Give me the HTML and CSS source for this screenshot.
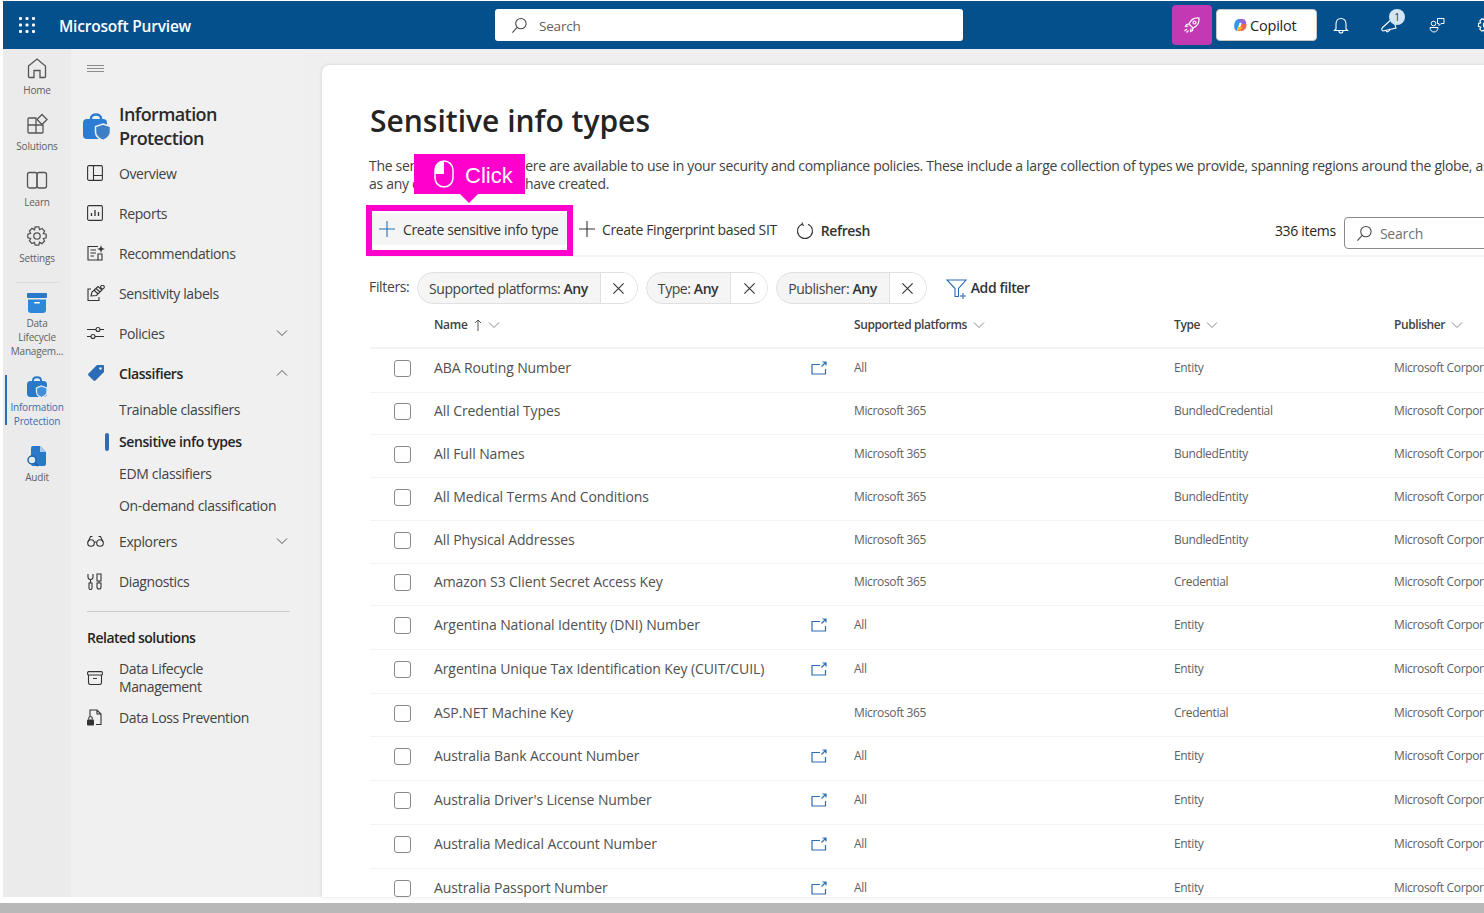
FILE: index.html
```html
<!DOCTYPE html>
<html lang="en">
<head>
    <meta charset="UTF-8">
    <title>Sensitive info types - Microsoft Purview</title>
    <link rel="stylesheet" href="styles.css">
</head>
<body>
    <svg class="defs" width="0" height="0">
        <symbol id="ic-ext" viewBox="0 0 16 14"><path d="M9 3.500H1V13H14.500V8M10.500 5.500L15 1M11.500 1H15V4.500" fill="none" stroke="#2b6cb5" stroke-width="1.200"/></symbol>
        <symbol id="ic-chev" viewBox="0 0 12 8"><path d="M1 1.500L6 6.500L11 1.500" fill="none" stroke="currentColor" stroke-width="1"/></symbol>
        <symbol id="ic-x" viewBox="0 0 14 14"><path d="M1.500 1.500L12.500 12.500M12.500 1.500L1.500 12.500" fill="none" stroke="#333" stroke-width="1.200"/></symbol>
        <symbol id="ic-search" viewBox="0 0 18 18"><circle cx="10.500" cy="7" r="5.500" fill="none" stroke="currentColor" stroke-width="1.100"/><path d="M6.500 11L1.500 16.500" stroke="currentColor" stroke-width="1.100"/></symbol>
        <symbol id="ic-plus" viewBox="0 0 18 18"><path d="M9 1V17M1 9H17" fill="none" stroke="currentColor" stroke-width="1.100"/></symbol>
    </svg>

    <div class="app">
        <header class="topbar">
            <svg class="waffle" width="16" height="16" viewBox="0 0 16 16" fill="#fff">
                <rect x="0" y="0" width="3" height="3" rx="1"/><rect x="6.500" y="0" width="3" height="3" rx="1"/><rect x="13" y="0" width="3" height="3" rx="1"/>
                <rect x="0" y="6.500" width="3" height="3" rx="1"/><rect x="6.500" y="6.500" width="3" height="3" rx="1"/><rect x="13" y="6.500" width="3" height="3" rx="1"/>
                <rect x="0" y="13" width="3" height="3" rx="1"/><rect x="6.500" y="13" width="3" height="3" rx="1"/><rect x="13" y="13" width="3" height="3" rx="1"/>
            </svg>
            <div class="brand">Microsoft Purview</div>
            <div class="topsearch">
                <svg width="17" height="17"><use href="#ic-search"/></svg>
                <span>Search</span>
            </div>
            <div class="rocket">
                <svg width="18" height="18" viewBox="0 0 18 18" fill="none" stroke="#fff" stroke-width="1.200">
                    <path d="M6 8C8 3.500 12 1.500 16 2C16.500 6 14.500 10 10 12L6 8Z"/>
                    <circle cx="11.500" cy="6.500" r="1.500"/>
                    <path d="M6 8L3.500 8.500L2.500 10.500L5.500 10M10 12L9.500 14.500L7.500 15.500L8 12.500M4 13L1.500 15M5.500 14.500L3.500 16.500"/>
                </svg>
            </div>
            <div class="copilot">
                <svg width="14" height="14" viewBox="0 0 14 14">
                    <path d="M2 4C3 1.500 5 1 7 1H9.500L6 7L3.500 13C1 12 0.500 7.500 2 4Z" fill="#2f9be8"/>
                    <path d="M6 1H10C12.500 1.500 13.500 4 13 6H8.500Z" fill="#9a62d8"/>
                    <path d="M8.500 6H13.500C14 9 12 13 8.500 13H3.500C5.500 12 7 9.500 8.500 6Z" fill="#ee6a4d"/>
                    <path d="M5 9H9L7.500 12.500H4Z" fill="#f7b733"/>
                    <path d="M6.500 5H8.500L7 9H5.500Z" fill="#fff"/>
                </svg>
                <span>Copilot</span>
            </div>
            <svg class="tb-bell" width="16" height="17" viewBox="0 0 16 17" fill="none" stroke="#fff" stroke-width="1.100">
                <path d="M3 12V7C3 3.500 5 1.500 8 1.500C11 1.500 13 3.500 13 7V12L14.500 13.500H1.500L3 12Z"/>
                <path d="M6 14C6 15.500 7 16 8 16C9 16 10 15.500 10 14"/>
            </svg>
            <div class="tb-mega">
                <svg width="18" height="18" viewBox="0 0 18 18" fill="none" stroke="#fff" stroke-width="1.100">
                    <path d="M12 2L15 12L2 15C0.500 14.500 0.500 12.500 1.500 11.500L12 2Z"/>
                    <path d="M5 14.500C5.500 16.500 8 16.500 9 13"/>
                </svg>
                <span class="badge">1</span>
            </div>
            <svg class="tb-feedback" width="16" height="16" viewBox="0 0 16 16" fill="none" stroke="#fff" stroke-width="1">
                <circle cx="4.500" cy="6.500" r="2.300"/>
                <path d="M1 10.500H9C9 13.500 7 15 5 15C3 15 1 13.500 1 10.500Z"/>
                <path d="M8.500 1.500H15V6.500H12L10 8.500V6.500H8.500Z"/>
            </svg>
            <svg class="tb-gear" width="18" height="18" viewBox="0 0 24 24" fill="none" stroke="#fff" stroke-width="1.500">
                <circle cx="12" cy="12" r="3.500"/>
                <path d="M10 2H14L14.800 5L17.500 3.800L20.300 6.600L18.900 9.300L22 10V14L19 14.800L20.200 17.500L17.400 20.300L14.700 18.900L14 22H10L9.200 19L6.500 20.200L3.700 17.400L5.100 14.700L2 14V10L5 9.200L3.800 6.500L6.600 3.700L9.300 5.100Z"/>
            </svg>
        </header>

        <div class="workspace">
            <aside class="rail">
                <div class="rail-item rail-top">
                    <svg width="22" height="22" viewBox="0 0 22 22" fill="none" stroke="#555" stroke-width="1.300"><path d="M2.500 9L11 2L19.500 9V19.500A1 1 0 0 1 18.500 20.500H14V13.500H8V20.500H3.500A1 1 0 0 1 2.500 19.500Z"/></svg>
                    <span>Home</span>
                </div>
                <div class="rail-item rail-top">
                    <svg width="22" height="22" viewBox="0 0 22 22" fill="none" stroke="#555" stroke-width="1.300"><path d="M10 5H3A1 1 0 0 0 2 6V19A1 1 0 0 0 3 20H16A1 1 0 0 0 17 19V12H10ZM2 12H10V20"/><path d="M16 1.500L21 6.500L16 11.500L11 6.500Z"/></svg>
                    <span>Solutions</span>
                </div>
                <div class="rail-item rail-top">
                    <svg width="22" height="22" viewBox="0 0 22 22" fill="none" stroke="#555" stroke-width="1.300"><rect x="1.500" y="3.500" width="9.500" height="15.500" rx="2"/><rect x="11" y="3.500" width="9.500" height="15.500" rx="2"/></svg>
                    <span>Learn</span>
                </div>
                <div class="rail-item rail-top">
                    <svg width="22" height="22" viewBox="0 0 24 24" fill="none" stroke="#555" stroke-width="1.400"><circle cx="12" cy="12" r="3.500"/><path d="M10 2H14L14.800 5L17.500 3.800L20.300 6.600L18.900 9.300L22 10V14L19 14.800L20.200 17.500L17.400 20.300L14.700 18.900L14 22H10L9.200 19L6.500 20.200L3.700 17.400L5.100 14.700L2 14V10L5 9.200L3.800 6.500L6.600 3.700L9.300 5.100Z"/></svg>
                    <span>Settings</span>
                </div>
                <div class="rail-sep"></div>
                <div class="rail-item rail-tall">
                    <svg width="22" height="22" viewBox="0 0 22 22"><rect x="1" y="1" width="20" height="5" rx="1" fill="#2a79c9"/><path d="M2 7.500H20V18A3 3 0 0 1 17 21H5A3 3 0 0 1 2 18Z" fill="#2e87d8"/><rect x="8" y="10" width="6" height="1.500" rx=".7" fill="#fff"/></svg>
                    <span>Data<br>Lifecycle<br>Managem...</span>
                </div>
                <div class="rail-item rail-active">
                    <svg width="22" height="22" viewBox="0 0 22 22"><path d="M7 7V5.500C7 1 15 1 15 5.500V7" fill="none" stroke="#2a79c9" stroke-width="2"/><rect x="1" y="6" width="20" height="16" rx="3.500" fill="#2a79c9"/><path d="M15.500 11L21 13V17C21 20 18 21.500 15.500 22.500C13 21.500 10.500 20 10.500 17V13Z" fill="#3f8fdc" stroke="#ebebeb" stroke-width="1.300"/></svg>
                    <span>Information<br>Protection</span>
                </div>
                <div class="rail-item">
                    <svg width="22" height="22" viewBox="0 0 22 22"><path d="M7 1H14L20 7V19A2 2 0 0 1 18 21H7A2 2 0 0 1 5 19V3A2 2 0 0 1 7 1Z" fill="#2a79c9"/><path d="M14 1L20 7H14Z" fill="#a9cdf0"/><circle cx="6" cy="15" r="4" fill="#dce9f6" stroke="#1f64aa" stroke-width="1.500"/><path d="M9 18L12 21" stroke="#1f64aa" stroke-width="1.800"/></svg>
                    <span>Audit</span>
                </div>
            </aside>

            <nav class="nav">
                <svg class="hamburger" width="17" height="8" viewBox="0 0 17 8"><path d="M0 .5H17M0 3.500H17M0 6.500H17" stroke="#8a8a8a" stroke-width="1"/></svg>
                <div class="nav-head">
                    <svg width="28" height="29" viewBox="0 0 28 29">
                        <path d="M8 9V6.500C8 1 18 1 18 6.500V9" fill="none" stroke="#2b7cd3" stroke-width="2.500"/>
                        <rect x="0" y="7" width="24" height="20" rx="4" fill="#2b7cd3"/>
                        <path d="M20 12L27.500 14.500V20C27.500 24.500 23.500 27 20 28.500C16.500 27 12.500 24.500 12.500 20V14.500Z" fill="#3d7fc6" stroke="#f0f0f0" stroke-width="1.500"/>
                    </svg>
                    <div class="nav-title">Information Protection</div>
                </div>
                <ul class="nav-list">
                    <li class="nav-item">
                        <svg width="16" height="16" viewBox="0 0 16 16" fill="none" stroke="#333" stroke-width="1.100"><rect x=".6" y=".6" width="14.800" height="14.800" rx="1.500"/><path d="M6.500 .6V15.400M6.500 10.500H15.400"/></svg>
                        <span>Overview</span>
                    </li>
                    <li class="nav-item">
                        <svg width="16" height="16" viewBox="0 0 16 16" fill="none" stroke="#333" stroke-width="1.100"><rect x=".6" y=".6" width="14.800" height="14.800" rx="1.500"/><path d="M4.500 11V8M8 11V5M11.500 11V7" stroke-width="1.300"/></svg>
                        <span>Reports</span>
                    </li>
                    <li class="nav-item">
                        <svg width="18" height="16" viewBox="0 0 18 16" fill="none" stroke="#333" stroke-width="1.100"><path d="M11 1.500H1V15H11M3.500 5H9M3.500 8H9M3.500 11H7"/><path d="M11 9H15V15H11Z"/><path d="M14 0L15 3L18 4L15 5L14 8L13 5L10 4L13 3Z" fill="#333" stroke="none"/></svg>
                        <span>Recommendations</span>
                    </li>
                    <li class="nav-item">
                        <svg width="18" height="17" viewBox="0 0 18 17" fill="none" stroke="#333" stroke-width="1.100"><path d="M4 4H1V15.500H12V12"/><path d="M4 11L5 7L11 1.500L15 5L9.500 10.500Z"/><path d="M7 5L11 9M9 3.500L13 7M14 1A1.500 1.500 0 1 1 17 3A1.500 1.500 0 0 1 14 1Z"/></svg>
                        <span>Sensitivity labels</span>
                    </li>
                    <li class="nav-item">
                        <svg width="17" height="14" viewBox="0 0 17 14" fill="none" stroke="#333" stroke-width="1.100"><path d="M0 3.500H9M13 3.500H17M0 10.500H4M8 10.500H17"/><circle cx="11" cy="3.500" r="2"/><circle cx="6" cy="10.500" r="2"/></svg>
                        <span>Policies</span>
                        <svg class="nav-chev" width="12" height="8"><use href="#ic-chev"/></svg>
                    </li>
                    <li class="nav-item nav-item-bold">
                        <svg width="18" height="18" viewBox="0 0 18 18"><path d="M10 1H16A1 1 0 0 1 17 2V8L8.500 16.500A1.500 1.500 0 0 1 6.500 16.500L1.500 11.500A1.500 1.500 0 0 1 1.500 9.500Z" fill="#2b6cb5"/><circle cx="13.500" cy="4.500" r="1.200" fill="#f0f0f0"/></svg>
                        <span>Classifiers</span>
                        <svg class="nav-chev nav-chev-up" width="12" height="8"><use href="#ic-chev"/></svg>
                    </li>
                </ul>
                <ul class="nav-sub">
                    <li>Trainable classifiers</li>
                    <li class="nav-sub-active">Sensitive info types</li>
                    <li>EDM classifiers</li>
                    <li>On-demand classification</li>
                </ul>
                <ul class="nav-list">
                    <li class="nav-item">
                        <svg width="17" height="12" viewBox="0 0 17 12" fill="none" stroke="#333" stroke-width="1.100"><circle cx="4" cy="8" r="3.300"/><circle cx="13" cy="8" r="3.300"/><path d="M7.300 7.500C8 6.800 9 6.800 9.700 7.500M1 7L3.500 1.500H5.500M16 7L13.500 1.500H11.500"/></svg>
                        <span>Explorers</span>
                        <svg class="nav-chev" width="12" height="8"><use href="#ic-chev"/></svg>
                    </li>
                    <li class="nav-item">
                        <svg width="16" height="17" viewBox="0 0 16 17" fill="none" stroke="#333" stroke-width="1.100"><path d="M1 1V4A2.500 2.500 0 0 0 6 4V1M3.500 6.500V10M2 10H5V15A1.500 1.500 0 0 1 2 15Z"/><path d="M10 1H14V8H10ZM12 8V10M10 10H14V14A2 2 0 0 1 10 14Z"/></svg>
                        <span>Diagnostics</span>
                    </li>
                </ul>
                <div class="nav-divider"></div>
                <div class="nav-related">Related solutions</div>
                <div class="nav-item nav-item-wrap">
                    <svg width="16" height="14" viewBox="0 0 16 14" fill="none" stroke="#333" stroke-width="1.100"><rect x=".6" y=".6" width="14.800" height="3.400" rx="1"/><path d="M1.500 4V11.500A2 2 0 0 0 3.500 13.500H12.500A2 2 0 0 0 14.500 11.500V4M6 7.500H10"/></svg>
                    <span>Data Lifecycle<br>Management</span>
                </div>
                <div class="nav-item nav-item-last">
                    <svg width="15" height="17" viewBox="0 0 15 17" fill="none" stroke="#333" stroke-width="1.100"><path d="M3 7V1H10L14 5V15.500H9M10 1V5H14"/><rect x="0" y="10.500" width="7" height="6" rx="1" fill="#333" stroke="none"/><path d="M1.800 10.500V9C1.800 7 5.200 7 5.200 9V10.500"/></svg>
                    <span>Data Loss Prevention</span>
                </div>
            </nav>

            <main class="panel">
                <h1 class="page-title">Sensitive info types</h1>
                <p class="page-desc">The sensitive info types here are available to use in your security and compliance policies. These include a large collection of types we provide, spanning regions around the globe, as well<br>as any custom types you have created.</p>

                <div class="toolbar">
                    <div class="tool tool-hover">
                        <svg class="tool-blue" width="18" height="18"><use href="#ic-plus"/></svg>
                        <span>Create sensitive info type</span>
                    </div>
                    <div class="tool tool-finger">
                        <svg width="18" height="18"><use href="#ic-plus"/></svg>
                        <span>Create Fingerprint based SIT</span>
                    </div>
                    <div class="tool tool-refresh">
                        <svg width="18" height="18" viewBox="0 0 18 18" fill="none" stroke="#333" stroke-width="1.100"><path d="M6 2.200A7.500 7.500 0 1 0 12 2.200"/><path d="M6.500 .5L6 2.500L8 3.500"/></svg>
                        <span>Refresh</span>
                    </div>
                    <div class="tool-count">336 items</div>
                    <div class="list-search">
                        <svg width="17" height="17"><use href="#ic-search"/></svg>
                        <span>Search</span>
                    </div>
                </div>

                <div class="filters">
                    <span class="filters-label">Filters:</span>
                    <div class="pill"><span class="pill-text">Supported platforms: <b>Any</b></span><span class="pill-x"><svg width="13" height="13"><use href="#ic-x"/></svg></span></div>
                    <div class="pill"><span class="pill-text">Type: <b>Any</b></span><span class="pill-x"><svg width="13" height="13"><use href="#ic-x"/></svg></span></div>
                    <div class="pill"><span class="pill-text">Publisher: <b>Any</b></span><span class="pill-x"><svg width="13" height="13"><use href="#ic-x"/></svg></span></div>
                    <div class="add-filter">
                        <svg width="22" height="20" viewBox="0 0 22 20" fill="none" stroke="#2b6cb5" stroke-width="1.100"><path d="M1 1H20L12.500 9.500V17.500H9V9.500Z"/><path d="M17 14V20M14 17H20"/></svg>
                        <span>Add filter</span>
                    </div>
                </div>

                <div class="row row-head">
                    <div></div>
                    <div class="cell-name">Name <svg class="sort-up" width="8" height="12" viewBox="0 0 8 12" fill="none" stroke="#555"><path d="M4 12V1M1 4L4 1L7 4"/></svg><svg class="hd-chev" width="12" height="8"><use href="#ic-chev"/></svg></div>
                    <div>Supported platforms<svg class="hd-chev" width="12" height="8"><use href="#ic-chev"/></svg></div>
                    <div>Type<svg class="hd-chev" width="12" height="8"><use href="#ic-chev"/></svg></div>
                    <div>Publisher<svg class="hd-chev" width="12" height="8"><use href="#ic-chev"/></svg></div>
                </div>

                <div class="row row-tall"><div><span class="check"></span></div><div class="cell-name">ABA Routing Number<svg class="ext" width="16" height="14"><use href="#ic-ext"/></svg></div><div>All</div><div>Entity</div><div>Microsoft Corporation</div></div>
                <div class="row row-short"><div><span class="check"></span></div><div class="cell-name">All Credential Types</div><div>Microsoft 365</div><div>BundledCredential</div><div>Microsoft Corporation</div></div>
                <div class="row"><div><span class="check"></span></div><div class="cell-name">All Full Names</div><div>Microsoft 365</div><div>BundledEntity</div><div>Microsoft Corporation</div></div>
                <div class="row"><div><span class="check"></span></div><div class="cell-name">All Medical Terms And Conditions</div><div>Microsoft 365</div><div>BundledEntity</div><div>Microsoft Corporation</div></div>
                <div class="row"><div><span class="check"></span></div><div class="cell-name">All Physical Addresses</div><div>Microsoft 365</div><div>BundledEntity</div><div>Microsoft Corporation</div></div>
                <div class="row row-short"><div><span class="check"></span></div><div class="cell-name">Amazon S3 Client Secret Access Key</div><div>Microsoft 365</div><div>Credential</div><div>Microsoft Corporation</div></div>
                <div class="row row-tall"><div><span class="check"></span></div><div class="cell-name">Argentina National Identity (DNI) Number<svg class="ext" width="16" height="14"><use href="#ic-ext"/></svg></div><div>All</div><div>Entity</div><div>Microsoft Corporation</div></div>
                <div class="row row-tall"><div><span class="check"></span></div><div class="cell-name">Argentina Unique Tax Identification Key (CUIT/CUIL)<svg class="ext" width="16" height="14"><use href="#ic-ext"/></svg></div><div>All</div><div>Entity</div><div>Microsoft Corporation</div></div>
                <div class="row"><div><span class="check"></span></div><div class="cell-name">ASP.NET Machine Key</div><div>Microsoft 365</div><div>Credential</div><div>Microsoft Corporation</div></div>
                <div class="row row-tall"><div><span class="check"></span></div><div class="cell-name">Australia Bank Account Number<svg class="ext" width="16" height="14"><use href="#ic-ext"/></svg></div><div>All</div><div>Entity</div><div>Microsoft Corporation</div></div>
                <div class="row row-tall"><div><span class="check"></span></div><div class="cell-name">Australia Driver's License Number<svg class="ext" width="16" height="14"><use href="#ic-ext"/></svg></div><div>All</div><div>Entity</div><div>Microsoft Corporation</div></div>
                <div class="row row-tall"><div><span class="check"></span></div><div class="cell-name">Australia Medical Account Number<svg class="ext" width="16" height="14"><use href="#ic-ext"/></svg></div><div>All</div><div>Entity</div><div>Microsoft Corporation</div></div>
                <div class="row row-tall"><div><span class="check"></span></div><div class="cell-name">Australia Passport Number<svg class="ext" width="16" height="14"><use href="#ic-ext"/></svg></div><div>All</div><div>Entity</div><div>Microsoft Corporation</div></div>

                <!-- tutorial callout over the page -->
                <div class="hl-box"></div>
                <div class="click-tip">
                    <svg width="20" height="28" viewBox="0 0 20 28" fill="none" stroke="#fff" stroke-width="1.500">
                        <path d="M10 1A9 9 0 0 0 1 10V14H10Z" fill="#fff" stroke="none"/>
                        <rect x="1" y="1" width="18" height="26" rx="9"/>
                    </svg>
                    <span>Click</span>
                </div>
            </main>
        </div>
    </div>
    <div class="page-strip"></div>
</body>
</html>
```

FILE: styles.css
```css
* {
    box-sizing: border-box;
    margin: 0;
    padding: 0;
}
html, body {
    height: 913px;
    overflow: hidden;
}
body {
    background: #fff;
    font-family: "Open Sans", "Noto Sans", sans-serif;
    font-size: 14px;
    color: #333;
}
ul {
    list-style: none;
}
svg {
    display: block;
    flex: none;
}
.defs {
    position: absolute;
}

.app {
    margin: 1px 0 0 3px;
    height: 896px;
    display: flex;
    flex-direction: column;
}

/* top bar */
.topbar {
    height: 48px;
    background: #03508c;
    display: flex;
    align-items: center;
    flex: none;
    overflow: hidden;
    color: #fff;
}
.waffle {
    margin-left: 16px;
}
.brand {
    margin-left: 24px;
    width: 436px;
    flex: none;
    padding-top: 2px;
    font-size: 15.5px;
    font-weight: 600;
    letter-spacing: -0.2px;
}
.topsearch {
    width: 468px;
    height: 32px;
    flex: none;
    background: #fff;
    border-radius: 3px;
    display: flex;
    align-items: center;
    color: #444;
    padding-left: 16px;
    font-size: 13.5px;
}
.topsearch span {
    margin: 2px 0 0 11px;
    color: #616161;
    letter-spacing: -0.2px;
}
.rocket {
    margin-left: 209px;
    width: 40px;
    height: 40px;
    flex: none;
    background: #c239b3;
    border-radius: 4px;
    display: flex;
    align-items: center;
    justify-content: center;
}
.copilot {
    margin-left: 4px;
    width: 101px;
    height: 32px;
    flex: none;
    background: #fff;
    border: 1px solid #c8c8c8;
    border-radius: 4px;
    display: flex;
    align-items: center;
    padding-left: 16px;
    color: #242424;
    font-weight: 500;
    font-size: 14.5px;
    letter-spacing: -0.2px;
}
.copilot span {
    margin-left: 3px;
}
.tb-bell {
    margin-left: 16px;
}
.tb-mega {
    margin-left: 32px;
    position: relative;
    flex: none;
}
.badge {
    position: absolute;
    left: 8px;
    top: -7px;
    width: 16px;
    height: 16px;
    border-radius: 50%;
    background: #d3e6f8;
    color: #333;
    font-size: 10px;
    line-height: 16px;
    text-align: center;
}
.tb-feedback {
    margin-left: 30px;
}
.tb-gear {
    margin-left: 32px;
}

/* left rail + nav */
.workspace {
    flex: 1;
    display: flex;
    background: #efefef;
    min-height: 0;
}
.rail {
    width: 68px;
    flex: none;
    background: #ebebeb;
    padding-top: 8px;
}
.rail-item {
    height: 56px;
    display: flex;
    flex-direction: column;
    align-items: center;
    color: #616161;
    font-size: 10px;
    line-height: 14px;
    text-align: center;
    letter-spacing: -0.2px;
}
.rail-item span {
    margin-top: 3px;
}
.rail-top span {
    margin-top: 4px;
}
.rail-sep {
    width: 44px;
    height: 1px;
    background: #dcdcdc;
    margin: 1px auto 9px;
}
.rail-tall {
    height: 83px;
}
.rail-tall span {
    margin-top: 2px;
}
.rail-active {
    height: 70px;
    color: #3d6fa8;
    position: relative;
}
.rail-active::before {
    content: "";
    position: absolute;
    left: 2px;
    top: 0;
    width: 2px;
    height: 50px;
    background: #2b6cb5;
}
.nav {
    width: 234px;
    flex: none;
    background: #f0f0f0;
    padding: 16px 0 0 16px;
}
.hamburger {
    margin-bottom: 29px;
}
.nav-head {
    display: flex;
    align-items: center;
    margin-left: -4px;
    height: 48px;
}
.nav-title {
    margin-left: 8px;
    width: 140px;
    font-size: 18px;
    line-height: 24px;
    font-weight: 600;
    letter-spacing: -0.6px;
    color: #2b2b2b;
}
.nav-head + .nav-list {
    margin-top: 3px;
}
.nav-item {
    height: 40px;
    display: flex;
    align-items: center;
    font-size: 14px;
    letter-spacing: -0.4px;
    color: #424242;
    position: relative;
}
.nav-item > span {
    position: absolute;
    left: 32px;
    white-space: nowrap;
}
.nav-item-bold {
    font-weight: 600;
    color: #242424;
}
.nav-chev {
    position: absolute;
    left: 189px;
    top: 16px;
    color: #555;
}
.nav-chev-up {
    transform: rotate(180deg);
}
.nav-sub {
    padding-left: 32px;
    margin: 1px 0 -1px;
}
.nav-sub li {
    height: 32px;
    line-height: 32px;
    font-size: 14px;
    letter-spacing: -0.33px;
    color: #424242;
    position: relative;
}
.nav-sub .nav-sub-active {
    font-weight: 600;
    letter-spacing: -0.4px;
    color: #242424;
}
.nav-sub-active::before {
    content: "";
    position: absolute;
    left: -14px;
    top: 7px;
    width: 4px;
    height: 18px;
    border-radius: 2px;
    background: #2b6cb5;
}
.nav-divider {
    width: 203px;
    height: 1px;
    background: #c8c8c8;
    margin-top: 10px;
}
.nav-related {
    margin-top: 15px;
    font-size: 14px;
    font-weight: 600;
    letter-spacing: -0.5px;
    color: #242424;
    line-height: 22px;
}
.nav-item-wrap {
    height: 40px;
    margin-top: 9px;
    line-height: 18.500px;
}
.nav-item-last {
    height: 19px;
    margin-top: 10px;
}

/* main panel */
.panel {
    flex: 1;
    min-width: 0;
    margin: 16px 0 0 17px;
    background: #fff;
    border-radius: 8px 0 0 0;
    box-shadow: 0 0 4px rgba(0, 0, 0, 0.12);
    padding: 36px 0 0 48px;
    position: relative;
    overflow: hidden;
}
.page-title {
    font-size: 30px;
    line-height: 40px;
    font-weight: 600;
    color: #242424;
}
.page-desc {
    margin-top: 16px;
    font-size: 14px;
    line-height: 18px;
    letter-spacing: -0.31px;
    color: #424242;
    white-space: nowrap;
    margin-left: -1px;
}

.toolbar {
    margin-top: 16px;
    height: 48px;
    display: flex;
    align-items: center;
    border-bottom: 2px solid #f3f3f3;
    margin-left: -3px;
    white-space: nowrap;
}
.tool {
    display: flex;
    align-items: center;
    height: 32px;
    flex: none;
    margin-top: -6px;
    font-size: 14px;
    letter-spacing: -0.35px;
    color: #333;
}
.tool span {
    margin-left: 7px;
}
.tool-hover {
    width: 195px;
    margin-left: 5px;
    padding-left: 6px;
    background: #f5f5f5;
    border-radius: 3px;
}
.tool-blue {
    color: #2b6cb5;
}
.tool-finger {
    margin-left: 11px;
}
.tool-finger span {
    margin-left: 6px;
}
.tool-refresh {
    margin: -3px 0 0 19px;
    font-weight: 600;
    letter-spacing: -0.4px;
}
.tool-count {
    margin: -4px 0 0 405px;
    flex: none;
    font-size: 14px;
    font-weight: 500;
    letter-spacing: -0.3px;
    color: #242424;
}
.list-search {
    margin: 2px 0 0 8px;
    width: 200px;
    height: 32px;
    flex: none;
    border: 1px solid #8a8a8a;
    border-radius: 4px;
    display: flex;
    align-items: center;
    padding-left: 11px;
    color: #444;
    font-size: 14px;
}
.list-search span {
    margin-left: 7px;
    color: #707070;
    letter-spacing: -0.2px;
}

.filters {
    margin-top: 15px;
    height: 32px;
    display: flex;
    align-items: center;
}
.filters-label {
    width: 48px;
    flex: none;
    margin: -3px 0 0 -1px;
    font-size: 14px;
    letter-spacing: -0.35px;
    color: #424242;
}
.pill {
    height: 32px;
    background: #f5f5f5;
    border: 1px solid #e0e0e0;
    border-radius: 16px;
    display: flex;
    align-items: center;
    margin-right: 8px;
    flex: none;
}
.pill-text {
    padding: 0 12px 0 11px;
    font-size: 14px;
    letter-spacing: -0.42px;
    color: #424242;
    white-space: nowrap;
}
.pill-text b {
    font-weight: 600;
    color: #333;
}
.pill-x {
    width: 37px;
    height: 30px;
    border-left: 1px solid #e0e0e0;
    display: flex;
    align-items: center;
    justify-content: center;
    background: #fff;
    border-radius: 0 15px 15px 0;
}
.add-filter {
    margin-left: 11px;
    display: flex;
    align-items: center;
    font-size: 14px;
    font-weight: 600;
    letter-spacing: -0.4px;
    color: #333;
    margin-top: 2px;
    white-space: nowrap;
}
.add-filter span {
    margin-left: 3px;
    margin-top: -4px;
}

/* table */
.row {
    display: grid;
    grid-template-columns: 64px 420px 320px 220px 200px;
    align-items: center;
    height: 43px;
    padding-bottom: 6px;
    border-bottom: 1px solid #f3f3f3;
    font-size: 12px;
    color: #616161;
    letter-spacing: -0.35px;
    white-space: nowrap;
}
.row-tall {
    height: 44px;
}
.row-short {
    height: 42px;
}
.row-head {
    margin-top: 1px;
    height: 44px;
    padding-bottom: 3px;
    border-bottom: 2px solid #f3f3f3;
    font-weight: 600;
    color: #424242;
    letter-spacing: -0.4px;
}
.row-head > div {
    display: flex;
    align-items: center;
}
.sort-up {
    margin-left: 6px;
}
.hd-chev {
    margin-left: 6px;
    color: #888;
}
.row .cell-name {
    font-size: 14px;
    font-weight: 500;
    letter-spacing: -0.1px;
    color: #505050;
    display: flex;
    align-items: center;
    padding-right: 27px;
}
.row-head .cell-name {
    font-size: 12px;
    font-weight: 600;
    color: #424242;
    letter-spacing: -0.3px;
    padding-right: 0;
}
.ext {
    margin-left: auto;
}
.check {
    display: block;
    margin: 2px 0 0 24px;
    width: 17px;
    height: 17px;
    border: 1px solid #8a8a8a;
    border-radius: 3px;
    background: #fff;
}

/* tutorial callout */
.hl-box {
    position: absolute;
    left: 44px;
    top: 140px;
    width: 207px;
    height: 51px;
    border: 6px solid #ff00cc;
}
.click-tip {
    position: absolute;
    left: 92px;
    top: 89px;
    width: 111px;
    height: 40px;
    background: #ff00cc;
    color: #fff;
    display: flex;
    align-items: center;
    padding-left: 20px;
    font-family: "Liberation Sans", sans-serif;
    font-size: 22px;
}
.click-tip span {
    margin: 3px 0 0 11px;
}
.click-tip::after {
    content: "";
    position: absolute;
    left: 46px;
    top: 40px;
    border: 9px solid transparent;
    border-top-color: #ff00cc;
    border-bottom: 0;
}

.page-strip {
    margin-top: 6px;
    height: 10px;
    background: #b8b8b8;
}
```
